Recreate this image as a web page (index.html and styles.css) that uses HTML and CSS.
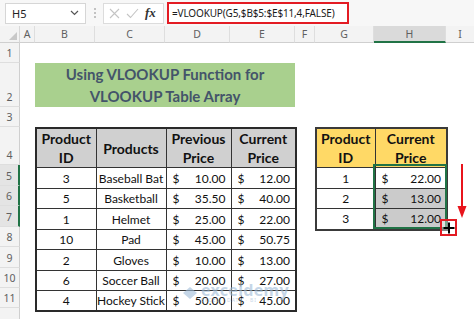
FILE: index.html
```html
<!DOCTYPE html>
<html>
<head>
<meta charset="utf-8">
<link rel="stylesheet" href="styles.css">
</head>
<body>
<div class="app">
  <div class="fbar">
    <div class="namebox">
      <span class="nb-text">H5</span>
      <svg class="chev" width="9" height="6" viewBox="0 0 9 6"><polyline points="1,1 4.5,4.5 8,1" fill="none" stroke="#555" stroke-width="1.2"/></svg>
    </div>
    <div class="dots"><i></i><i></i><i></i></div>
    <div class="fxbox">
      <svg width="11" height="11" viewBox="0 0 11 11"><path d="M1 1 L10 10 M10 1 L1 10" stroke="#c4c4c4" stroke-width="1.1" fill="none"/></svg>
      <svg width="13" height="11" viewBox="0 0 13 11"><path d="M1 6 L4.5 9.5 L12 1" stroke="#c4c4c4" stroke-width="1.1" fill="none"/></svg>
      <span class="fx">fx</span>
    </div>
    <div class="formula">=VLOOKUP(G5,$B$5:$E$11,4,FALSE)</div>
  </div>

  <div class="sheet">
    <div class="corner"><svg width="8" height="8" viewBox="0 0 8 8"><polygon points="8,0 8,8 0,8" fill="#c8c8c8"/></svg></div>
    <div class="ch">A</div>
    <div class="ch">B</div>
    <div class="ch">C</div>
    <div class="ch">D</div>
    <div class="ch">E</div>
    <div class="ch">F</div>
    <div class="ch">G</div>
    <div class="ch ch-sel">H</div>
    <div class="ch ch-last">I</div>

    <div class="rh r1">1</div>
    <div class="rh r2">2</div>
    <div class="rh r3">3</div>
    <div class="rh r4">4</div>
    <div class="rh r5 rh-sel">5</div>
    <div class="rh r6 rh-sel">6</div>
    <div class="rh r7 rh-sel">7</div>
    <div class="rh r8">8</div>
    <div class="rh r9">9</div>
    <div class="rh r10">10</div>
    <div class="rh r11">11</div>
    <div class="rh r12"></div>

    <div class="title">Using VLOOKUP Function for<br>VLOOKUP Table Array</div>

    <table class="main">
      <colgroup><col class="cb"><col class="cc"><col class="cd"><col class="ce"></colgroup>
      <thead>
        <tr class="hrow"><th>Product<br>ID</th><th>Products</th><th>Previous<br>Price</th><th>Current<br>Price</th></tr>
      </thead>
      <tbody>
        <tr class="ra"><td>3</td><td>Baseball Bat</td><td><div class="money"><span>$</span><span>10.00</span></div></td><td><div class="money"><span>$</span><span>12.00</span></div></td></tr>
        <tr class="rb"><td>5</td><td>Basketball</td><td><div class="money"><span>$</span><span>35.50</span></div></td><td><div class="money"><span>$</span><span>40.00</span></div></td></tr>
        <tr class="ra"><td>1</td><td>Helmet</td><td><div class="money"><span>$</span><span>25.00</span></div></td><td><div class="money"><span>$</span><span>22.00</span></div></td></tr>
        <tr class="rb"><td>10</td><td>Pad</td><td><div class="money"><span>$</span><span>45.00</span></div></td><td><div class="money"><span>$</span><span>50.75</span></div></td></tr>
        <tr class="ra"><td>2</td><td>Gloves</td><td><div class="money"><span>$</span><span>10.00</span></div></td><td><div class="money"><span>$</span><span>13.00</span></div></td></tr>
        <tr class="rb"><td>6</td><td>Soccer Ball</td><td><div class="money"><span>$</span><span>20.00</span></div></td><td><div class="money"><span>$</span><span>27.00</span></div></td></tr>
        <tr class="rb"><td>4</td><td>Hockey Stick</td><td><div class="money"><span>$</span><span>50.00</span></div></td><td><div class="money"><span>$</span><span>45.00</span></div></td></tr>
      </tbody>
    </table>

    <table class="lookup">
      <colgroup><col class="cg"><col class="chh"></colgroup>
      <thead>
        <tr class="hrow"><th>Product<br>ID</th><th>Current<br>Price</th></tr>
      </thead>
      <tbody>
        <tr class="ra"><td>1</td><td class="h"><div class="money"><span>$</span><span>22.00</span></div></td></tr>
        <tr class="rb"><td>2</td><td class="h shade"><div class="money"><span>$</span><span>13.00</span></div></td></tr>
        <tr class="ra"><td>3</td><td class="h shade"><div class="money"><span>$</span><span>12.00</span></div></td></tr>
      </tbody>
    </table>

    <div class="selbox"></div>
    <div class="handle"><svg width="12" height="12" viewBox="0 0 12 12"><path d="M6 0.5 V11.5 M0.5 6 H11.5" stroke="#000" stroke-width="2" fill="none"/></svg></div>
    <svg class="arrow" width="12" height="56" viewBox="0 0 12 56"><line x1="6" y1="0" x2="6" y2="44" stroke="#e8141c" stroke-width="2"/><polygon points="1.5,42 10.5,42 6,54" fill="#e8141c"/></svg>

    <div class="wm">
      <svg width="16" height="14" viewBox="0 0 16 14"><polygon points="8,1 15,7 8,13 1,7" fill="#9fbcd8"/></svg>
      <div class="wm-text"><span class="wm-big">exceldemy</span><span class="wm-small">EXCEL · DATA · BI</span></div>
    </div>
  </div>
</div>
</body>
</html>
```

FILE: styles.css
```css
* { box-sizing: border-box; }
html, body { margin: 0; padding: 0; background: #fff; }
body { width: 474px; height: 319px; overflow: hidden; }

.app { width: 474px; height: 319px; display: flex; flex-direction: column; }

.fbar {
  height: 26px;
  flex: none;
  background: #f7f7f7;
  display: flex;
  align-items: center;
  padding: 2px 0 2px 5px;
  font-family: "Noto Sans", sans-serif;
}
.namebox {
  width: 81px; height: 21px;
  background: #fff;
  border: 1px solid #d6d6d6;
  display: flex; align-items: center; justify-content: space-between;
  padding: 0 6px 0 6px;
}
.nb-text { font-size: 11px; color: #222; }
.dots { width: 17px; display: flex; flex-direction: column; align-items: center; gap: 2px; }
.dots i { width: 2px; height: 2px; background: #b0b0b0; border-radius: 1px; display: block; }
.fxbox {
  width: 61px; height: 21px;
  background: #fff;
  border: 1px solid #dcdcdc;
  display: flex; align-items: center; gap: 6px;
  padding-left: 5px;
}
.fx { font-family: "Liberation Serif", serif; font-style: italic; font-size: 13px; color: #333; font-weight: bold; }
.formula {
  margin-left: 3px;
  width: 182px; height: 22px;
  border: 2px solid #e31b23;
  background: #fff;
  font-size: 10px;
  letter-spacing: -0.15px;
  color: #1a1a1a;
  display: flex; align-items: center;
  padding-left: 3px;
  white-space: nowrap;
  overflow: hidden;
}

.sheet {
  position: relative;
  display: grid;
  grid-template-columns: 20px 15px 60px 70px 65px 65px 20px 59px 72px 28px;
  grid-template-rows: 17px 20px 44px 20px 38px 21px 20px 21px 20px 21px 20px 20px 20px;
  flex: 1;
  background: #fff;
}
.corner {
  grid-row: 1; grid-column: 1;
  background: #f3f3f3;
  border-bottom: 1px solid #cfcfcf;
  border-right: 1px solid #d8d8d8;
  display: flex; align-items: flex-end; justify-content: flex-end;
  padding: 0 2px 2px 0;
}
.ch {
  grid-row: 1;
  background: #f3f3f3;
  border-bottom: 1px solid #cfcfcf;
  border-right: 1px solid #dedede;
  font-family: "Noto Sans", sans-serif;
  font-size: 10.5px;
  color: #606060;
  display: flex; align-items: center; justify-content: center;
}
.ch-sel { background: #dadada; border-bottom: 2px solid #217346; }
.ch-last { border-right: none; }

.rh {
  grid-column: 1;
  background: #f3f3f3;
  border-right: 1px solid #cfcfcf;
  border-bottom: 1px solid #dedede;
  font-family: "Noto Sans", sans-serif;
  font-size: 10.5px;
  color: #606060;
  display: flex; align-items: flex-end; justify-content: center;
  padding-bottom: 2px;
}
.r1 { grid-row: 2; } .r2 { grid-row: 3; } .r3 { grid-row: 4; } .r4 { grid-row: 5; }
.r5 { grid-row: 6; } .r6 { grid-row: 7; } .r7 { grid-row: 8; } .r8 { grid-row: 9; }
.r9 { grid-row: 10; } .r10 { grid-row: 11; } .r11 { grid-row: 12; } .r12 { grid-row: 13; }
.rh-sel { background: #e4e4e4; border-right: 2px solid #217346; }

.title {
  grid-row: 3; grid-column: 3 / 7;
  background: #a9d08e;
  color: #44546a;
  font-family: Lato, sans-serif;
  font-weight: bold;
  font-size: 15px;
  line-height: 22px;
  text-align: center;
  display: flex; align-items: center; justify-content: center;
}

table { border-collapse: collapse; table-layout: fixed; font-family: Lato, sans-serif; }
.main { grid-row: 5 / 13; grid-column: 3 / 7; width: 260px; height: 181px; border: 2px solid #2a2a2a; }
.lookup { grid-row: 5 / 9; grid-column: 8 / 10; width: 131px; height: 100px; border: 2px solid #3a3a3a; }
.cb { width: 60px; } .cc { width: 70px; } .cd { width: 65px; } .ce { width: 65px; }
.cg { width: 59px; } .chh { width: 72px; }

th {
  font-weight: bold;
  font-size: 14px;
  line-height: 19px;
  color: #111;
  border: 1px solid #333;
  padding: 0;
  text-align: center;
  vertical-align: middle;
}
.main th { background: #d0d0d0; }
.lookup th { background: #ffd966; }
.hrow { height: 38px; }
.ra { height: 21px; } .rb { height: 20px; }
td {
  border: 1px solid #333;
  font-size: 12px;
  color: #111;
  text-align: center;
  padding: 0;
  vertical-align: middle;
  white-space: nowrap;
  overflow: hidden;
}
.money { display: flex; justify-content: space-between; padding: 0 5px 0 6px; }
.shade { background: #cbcbcb; }

.selbox {
  position: absolute;
  left: 373px; top: 138px;
  width: 74px; height: 65px;
  border: 2px solid #217346;
  pointer-events: none;
}
.handle {
  position: absolute;
  left: 440px; top: 193px;
  width: 17px; height: 17px;
  border: 2px solid #e31b23;
  background: rgba(255,255,255,0.4);
  display: flex; align-items: center; justify-content: center;
}
.arrow { position: absolute; left: 456px; top: 138px; }

.wm {
  position: absolute;
  left: 182px; top: 256px;
  display: flex; align-items: center; gap: 3px;
  opacity: 0.6;
  pointer-events: none;
}
.wm-text { display: flex; flex-direction: column; line-height: 1; }
.wm-big { font-family: "Noto Sans", sans-serif; font-size: 16px; font-weight: bold; color: #9fbcd8; letter-spacing: 0.3px; }
.wm-small { font-family: "Noto Sans", sans-serif; font-size: 5px; color: #9fbcd8; letter-spacing: 1px; }
```
